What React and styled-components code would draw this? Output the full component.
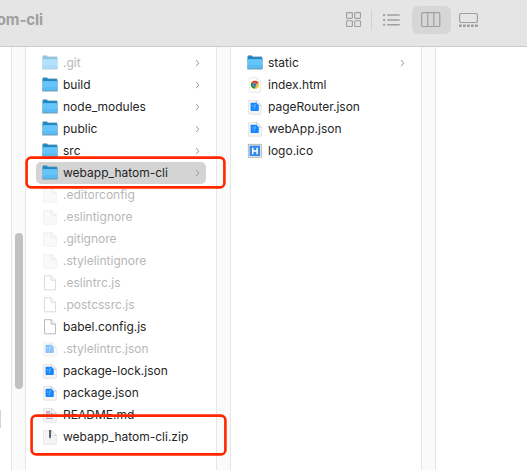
import React from "react";
import styled, { createGlobalStyle } from "styled-components";

const Global = createGlobalStyle`
  * { box-sizing: border-box; }
  body { margin: 0; background: #fff; font-family: Inter, "Liberation Sans", sans-serif; }
`;

const Window = styled.div`
  position: relative;
  display: flex;
  flex-direction: column;
  width: 527px;
  height: 470px;
  overflow: hidden;
  background: #fff;
`;

const Toolbar = styled.header`
  display: flex;
  align-items: center;
  justify-content: space-between;
  flex: none;
  height: 47px;
  padding-bottom: 6px;
  background: #e5e5e5;
  border-bottom: 1px solid #cbcbcb;
`;

const Title = styled.div`
  display: flex;
  justify-content: flex-end;
  width: 43px;
  color: #9f9f9f;
  font-size: 15px;
  font-weight: 700;
  letter-spacing: -0.1px;
  line-height: 20px;
  white-space: nowrap;
`;

const Views = styled.nav`
  display: flex;
  align-items: center;
  width: 190px;
  height: 40px;
`;

const ViewButton = styled.button`
  display: flex;
  align-items: center;
  justify-content: center;
  width: ${(p) => p.$width}px;
  height: 28px;
  padding: 0;
  border: 0;
  border-radius: 6px;
  color: #a0a0a0;
  background: ${(p) => (p.$active ? "#d6d6d6" : "transparent")};
`;

const Divider = styled.div`
  width: 1px;
  height: 20px;
  background: #d2d2d2;
`;

const Browser = styled.main`
  display: flex;
  flex: 1;
  min-height: 0;
`;

const Column = styled.section`
  flex: none;
  width: ${(p) => p.$width}px;
  padding: 5px 10px 0;
`;

const ClippedColumn = styled.section`
  flex: none;
  width: 11px;
  padding-top: 363px;
`;

const ClippedItem = styled.div`
  width: 1px;
  height: 18px;
  background: #d4d4d4;
`;

const Track = styled.div`
  flex: none;
  width: 15px;
  padding: ${(p) => p.$offset || 0}px 0 0 3px;
  background: #fafafa;
  border: solid #e6e6e6;
  border-width: 0 1px;
`;

const Thumb = styled.div`
  width: 8px;
  height: 156px;
  border-radius: 4px;
  background: #c1c1c1;
`;

const Row = styled.div`
  display: flex;
  align-items: center;
  height: 22px;
  padding: 0 4px 0 6px;
  border-radius: 5px;
  background: ${(p) => (p.$selected ? "#d4d4d4" : "transparent")};
`;

const IconBox = styled.span`
  display: flex;
  flex: none;
  width: 16px;
  height: 16px;
  margin-right: 5px;
  opacity: ${(p) => (p.$dim ? 0.5 : 1)};
`;

const Name = styled.span`
  flex: 1;
  color: ${(p) => (p.$dim ? "#b7b7b7" : "#252525")};
  font-size: 12px;
  line-height: 22px;
  white-space: nowrap;
`;

const Highlight = styled.div`
  position: absolute;
  left: ${(p) => p.$x}px;
  top: ${(p) => p.$y}px;
  width: ${(p) => p.$w}px;
  height: ${(p) => p.$h}px;

  rect {
    fill: none;
    stroke: #ff2600;
    stroke-width: 2.6;
  }

  svg {
    display: block;
  }
`;

const Folder = () => (
  <svg width="16" height="16" viewBox="0 0 16 16">
    <path d="M.5 1.7q0-.9.9-.9h3.5l1.2 1.1h8.3q1 0 1 1V6H.5z" fill="#1c88c9" />
    <path d="M.5 4.6h14.9v9.2H.5z" fill="#65c5fa" />
    <path d="M.5 10h14.9v3.8H.5z" fill="#5abcf3" />
    <path d="M.5 4.7h14.9" stroke="#85d2fb" strokeWidth=".7" />
    <path d="M.4 3.5v10.3M15.5 3.5v10.3" stroke="#78a9c5" strokeWidth=".6" />
    <path d="M.4 14h15.1" stroke="#6590aa" strokeWidth=".9" />
    <path d="M.8.8h4.1l1.2 1h9" fill="none" stroke="#7295aa" strokeWidth=".7" />
  </svg>
);

const Page = () => (
  <>
    <path d="M1.5 1.5h8.2l4.7 4.7v8.1q0 1-1 1H2.5q-1 0-1-1z" fill="#f4f4f4" stroke="#dfdfdf" strokeWidth=".7" />
    <path d="M9.4 1.5v4q0 .9.9.9h4.1z" fill="#fff" stroke="#bdbdbd" strokeWidth=".6" />
  </>
);

const Doc = () => <svg width="16" height="16" viewBox="0 0 16 16"><Page /></svg>;

const Script = () => (
  <svg width="16" height="16" viewBox="0 0 16 16">
    <path d="M2.5.7h6.7l4.3 4.4v9.7h-11z" fill="#fff" stroke="#aaa" strokeWidth=".8" />
    <path d="M9.1.8v4.4h4.3" fill="#f7f7f7" stroke="#aaa" strokeWidth=".8" />
  </svg>
);

const Json = () => (
  <svg width="16" height="16" viewBox="0 0 16 16">
    <Page />
    <path d="M4.4 3.8h5.2l2.2 2.1v5.4q0 .8-.8.8H4.4q-.8 0-.8-.8V4.6q0-.8.8-.8z" fill="#1687ff" />
    <path d="M9.3 5.8H7.8v2.5L7 10.2M5.8 6v2" fill="none" stroke="#8bc4ff" strokeWidth=".75" />
  </svg>
);

const Markdown = () => (
  <svg width="16" height="16" viewBox="0 0 16 16">
    <Page />
    <path d="M4 4.8h4M4 7h2" stroke="#d17f9c" strokeWidth="1.2" />
    <path d="M6 7h5M4 9.2h5" stroke="#75b5cc" strokeWidth="1.2" />
    <path d="M4 11.3h7" stroke="#a8a0bd" />
  </svg>
);

const Zip = () => (
  <svg width="16" height="16" viewBox="0 0 16 16">
    <Page />
    <path d="M8 1v7.5" stroke="#53606a" strokeWidth="2" />
    <path d="M8 7.2v2.1" stroke="#666" strokeWidth="1.5" />
    <path d="M7.2 3.2h1.6M7.2 5.2h1.6" stroke="#899" strokeWidth=".5" />
  </svg>
);

const Html = () => (
  <svg width="16" height="16" viewBox="0 0 16 16">
    <path d="M2.3.8h7.9l3.4 3.5v10.2q0 .8-.8.8H2.3z" fill="#fff" stroke="#e0e0e0" strokeWidth=".7" />
    <path d="M10 .8v3.6h3.6" fill="#fff" stroke="#ddd" strokeWidth=".7" />
    <circle cx="7.9" cy="7.7" r="4" fill="#f8c42d" />
    <path d="M7.9 7.7 4.4 5.7a4 4 0 0 1 7.1.2z" fill="#dc3c30" />
    <path d="M4.4 5.7a4 4 0 0 0 3.2 6l1.6-3.2-1.3-.8z" fill="#218c46" />
    <circle cx="7.9" cy="7.7" r="1.7" fill="#3569bd" stroke="#dce4f2" strokeWidth=".4" />
  </svg>
);

const Ico = () => (
  <svg width="16" height="16" viewBox="0 0 16 16">
    <rect x="1.3" y="1.3" width="13" height="13" fill="#fff" stroke="#a8a8a8" strokeWidth=".8" />
    <path d="M2.5 2.5h10.7v10.7H2.5z" fill="#3789e8" />
    <path d="M5.7 4.7v6.5M10.1 4.7v6.5M5.7 8h4.4" stroke="#fff" strokeWidth="1.5" />
  </svg>
);

const Chevron = () => (
  <svg width="9" height="10" viewBox="0 0 9 10">
    <path d="m3.2 2.1 2.5 3-2.5 3" fill="none" stroke="#999" strokeWidth="1" />
  </svg>
);

const GridIcon = () => (
  <svg width="16" height="16" viewBox="0 0 16 16" fill="none" stroke="currentColor" strokeWidth="1.15">
    {[0.6, 8.7].map((y) => [0.6, 8.7].map((x) => (
      <rect key={`${x}-${y}`} x={x} y={y} width="5.8" height="5.8" rx=".8" />
    )))}
  </svg>
);

const ListIcon = () => (
  <svg width="18" height="16" viewBox="0 0 18 16" stroke="currentColor" fill="none">
    <path d="M.1 3h2M.1 8h2M.1 12.8h2" strokeWidth="1.9" />
    <path d="M4.7 3h11.5M4.7 8h11.5M4.7 12.8h11.5" strokeWidth="1.4" strokeLinecap="round" />
  </svg>
);

const ColumnsIcon = () => (
  <svg width="21" height="16" viewBox="0 0 21 16" fill="none" stroke="currentColor" strokeWidth="1.2">
    <rect x=".6" y=".7" width="18.2" height="13.8" rx="1.3" />
    <path d="M6.7 1v13.5M12.8 1v13.5" />
  </svg>
);

const GalleryIcon = () => (
  <svg width="19" height="16" viewBox="0 0 19 16" fill="none" stroke="currentColor">
    <rect x=".6" y="1.5" width="17.8" height="9" rx="1.2" strokeWidth="1.2" />
    <path d="M0 13.7h19" strokeWidth="2.5" strokeDasharray="2.8 1.2" />
  </svg>
);

const icons = { folder: Folder, doc: Doc, js: Script, json: Json, md: Markdown, zip: Zip, html: Html, ico: Ico };

const project = [
  { name: ".git", icon: "folder", dim: true },
  { name: "build", icon: "folder" },
  { name: "node_modules", icon: "folder" },
  { name: "public", icon: "folder" },
  { name: "src", icon: "folder" },
  { name: "webapp_hatom-cli", icon: "folder", selected: true },
  { name: ".editorconfig", icon: "doc", dim: true },
  { name: ".eslintignore", icon: "doc", dim: true },
  { name: ".gitignore", icon: "doc", dim: true },
  { name: ".stylelintignore", icon: "doc", dim: true },
  { name: ".eslintrc.js", icon: "js", dim: true },
  { name: ".postcssrc.js", icon: "js", dim: true },
  { name: "babel.config.js", icon: "js" },
  { name: ".stylelintrc.json", icon: "json", dim: true },
  { name: "package-lock.json", icon: "json" },
  { name: "package.json", icon: "json" },
  { name: "README.md", icon: "md" },
  { name: "webapp_hatom-cli.zip", icon: "zip" },
];

const output = [
  { name: "static", icon: "folder" },
  { name: "index.html", icon: "html" },
  { name: "pageRouter.json", icon: "json" },
  { name: "webApp.json", icon: "json" },
  { name: "logo.ico", icon: "ico" },
];

const FileList = ({ files }) => files.map((file) => {
  const Icon = icons[file.icon];
  return (
    <Row key={file.name} $selected={file.selected}>
      <IconBox $dim={file.dim}><Icon /></IconBox>
      <Name $dim={file.dim}>{file.name}</Name>
      {file.icon === "folder" && <Chevron />}
    </Row>
  );
});

const Outline = ({ x, y, w, h }) => (
  <Highlight $x={x} $y={y} $w={w} $h={h}>
    <svg width={w} height={h}>
      <rect x="1.6" y="1.6" width={w - 3.2} height={h - 3.2} rx="4.5" />
    </svg>
  </Highlight>
);

export default function App() {
  return (
    <>
      <Global />
      <Window>
        <Toolbar>
          <Title>om-cli</Title>
          <Views>
            <ViewButton $width={34}><GridIcon /></ViewButton>
            <Divider />
            <ViewButton $width={40}><ListIcon /></ViewButton>
            <ViewButton $width={39} $active><ColumnsIcon /></ViewButton>
            <ViewButton $width={35}><GalleryIcon /></ViewButton>
          </Views>
        </Toolbar>
        <Browser>
          <ClippedColumn><ClippedItem /></ClippedColumn>
          <Track $offset={186}><Thumb /></Track>
          <Column $width={190}><FileList files={project} /></Column>
          <Track />
          <Column $width={190}><FileList files={output} /></Column>
          <Track />
        </Browser>
        <Outline x={25} y={156} w={201} h={33} />
        <Outline x={30} y={414} w={197} h={42} />
      </Window>
    </>
  );
}
